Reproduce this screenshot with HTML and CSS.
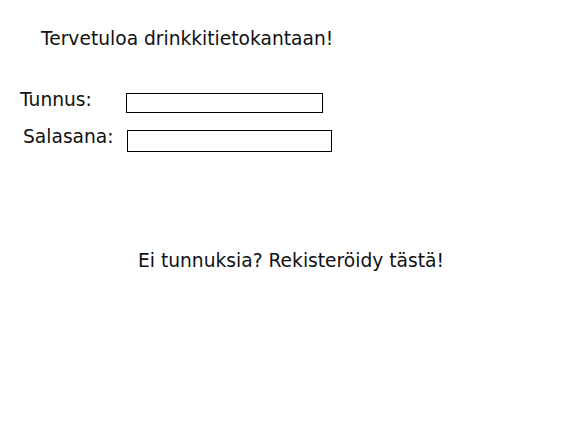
FILE: index.html
```html
<!DOCTYPE html>
<html>
<head>
<meta charset="utf-8">
<link rel="stylesheet" href="styles.css">
</head>
<body>
<div class="page">
  <h1 class="title">Tervetuloa drinkkitietokantaan!</h1>
  <form class="login">
    <div class="row row-user">
      <label class="label">Tunnus:</label>
      <input class="field field-user" type="text">
    </div>
    <div class="row row-pass">
      <label class="label">Salasana:</label>
      <input class="field field-pass" type="password">
    </div>
  </form>
  <p class="register">Ei tunnuksia? Rekisteröidy tästä!</p>
</div>
</body>
</html>
```
FILE: styles.css
```css
html, body {
  margin: 0;
  padding: 0;
  background: #fff;
}
body {
  font-family: "DejaVu Sans", sans-serif;
  font-size: 18.67px;
  color: #111;
}
.page {
  display: flex;
  flex-direction: column;
}
.title {
  margin: 28px 0 0 41px;
  font-size: 18.67px;
  font-weight: normal;
  line-height: 22px;
}
.login {
  margin-top: 43px;
  display: flex;
  flex-direction: column;
}
.row {
  display: flex;
  align-items: flex-start;
}
.label {
  line-height: 22px;
}
.row-user {
  padding-left: 20px;
}
.row-user .label {
  width: 106px;
  margin-top: -4px;
}
.row-pass {
  padding-left: 23px;
  margin-top: 17px;
}
.row-pass .label {
  width: 104px;
  margin-top: -4px;
}
.field {
  box-sizing: border-box;
  border: 1px solid #000;
  border-radius: 0;
  padding: 0;
  margin: 0;
  background: #fff;
  outline: none;
}
.field-user {
  width: 197px;
  height: 20px;
}
.field-pass {
  width: 205px;
  height: 22px;
}
.register {
  margin: 98px 0 0 138px;
  line-height: 22px;
}
```
